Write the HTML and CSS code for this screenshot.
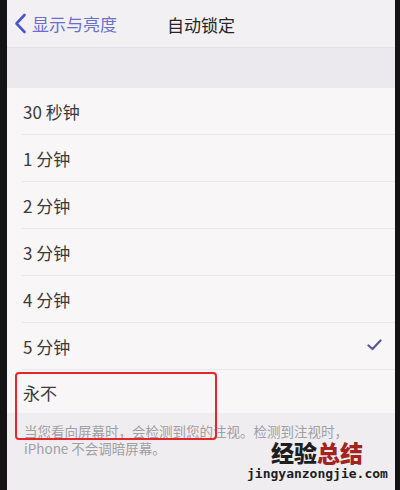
FILE: index.html
```html
<!DOCTYPE html>
<html>
<head>
	<meta charset="utf-8">
	<link rel="stylesheet" href="styles.css">
</head>
<body>
	<div class="screen">
		<div class="navbar">
			<div class="back">
				<svg class="chevron" width="13" height="21" viewBox="0 0 13 21"><path d="M10.5 2 L2.5 10.5 L10.5 19" fill="none" stroke="#4d55c8" stroke-width="2.6" stroke-linecap="round" stroke-linejoin="round"/></svg>
				<span>显示与亮度</span>
			</div>
			<div class="title">自动锁定</div>
			<div></div>
		</div>
		<div class="gap"></div>

		<div class="list">
			<div class="row"><span>30 秒钟</span></div>
			<div class="row"><span>1 分钟</span></div>
			<div class="row"><span>2 分钟</span></div>
			<div class="row"><span>3 分钟</span></div>
			<div class="row"><span>4 分钟</span></div>
			<div class="row"><span>5 分钟</span>
				<svg class="check" width="15" height="12" viewBox="0 0 15 12"><path d="M1.5 6.5 L5.5 10 L13.5 1.5" fill="none" stroke="#555a96" stroke-width="2.2" stroke-linecap="round" stroke-linejoin="round"/></svg>
			</div>
			<div class="row last"><span>永不</span></div>
		</div>

		<div class="footer">
			当您看向屏幕时，会检测到您的注视。检测到注视时，<br>
			iPhone 不会调暗屏幕。
		</div>

		<div class="highlight"></div>

		<div class="watermark">
			<div class="wm-title"><span class="wm-dark">经验</span><span class="wm-red">总结</span></div>
			<div class="wm-url">jingyanzongjie.com</div>
		</div>
	</div>
</body>
</html>
```

FILE: styles.css
```css
body,
html {
	margin: 0;
	padding: 0;
	background-color: #141414;
	height: 490px;
	overflow: hidden;
}

.screen {
	position: relative;
	margin: 0 5px 0 7px;
	width: 388px;
	height: 490px;
	background-color: #f8f6f7;
	font-family: "Noto Sans CJK SC", "Noto Sans", sans-serif;
	color: #3b3a3d;
	overflow: hidden;
}

.navbar {
	height: 48px;
	display: grid;
	grid-template-columns: 1fr auto 1fr;
	align-items: center;
	background-color: #f2f0f3;
	border-bottom: 1px solid #e3e1e4;
	box-sizing: border-box;
}

.back {
	display: flex;
	align-items: center;
	padding-left: 7px;
	color: #6a6fcb;
	font-size: 17px;
}

.chevron {
	margin-right: 5px;
}

.title {
	font-size: 17px;
	color: #262528;
	padding-top: 1px;
}

.gap {
	height: 40px;
	background-color: #ebe9ed;
}

.list {
	background-color: #f8f6f7;
}

.row {
	height: 47px;
	margin-left: 15px;
	padding: 0 13px 0 1px;
	display: flex;
	align-items: center;
	justify-content: space-between;
	border-bottom: 1px solid #eae7ea;
	box-sizing: border-box;
	font-size: 17px;
}

.row.last {
	height: 43px;
	border-bottom: none;
	padding-top: 1px;
}

.check {
	margin-top: -2px;
}

.footer {
	height: 90px;
	background-color: #efedf0;
	padding: 10px 0 0 17px;
	font-size: 13.5px;
	line-height: 17px;
	color: #a09fa4;
	box-sizing: border-box;
}

.highlight {
	position: absolute;
	left: 8px;
	top: 372px;
	width: 202px;
	height: 68px;
	border: 2.5px solid #e8252b;
	border-radius: 4px;
	box-sizing: border-box;
}

.watermark {
	position: absolute;
	left: 240px;
	top: 441px;
	width: 140px;
	text-align: center;
}

.wm-title {
	font-size: 23px;
	font-weight: 900;
	line-height: 23px;
}

.wm-dark {
	color: #1e1e1e;
}

.wm-red {
	color: #a3231f;
}

.wm-url {
	margin-top: 3px;
	font-family: "DejaVu Sans Mono", monospace;
	font-size: 13px;
	line-height: 14px;
	color: #1e1e1e;
	font-weight: bold;
}
```
